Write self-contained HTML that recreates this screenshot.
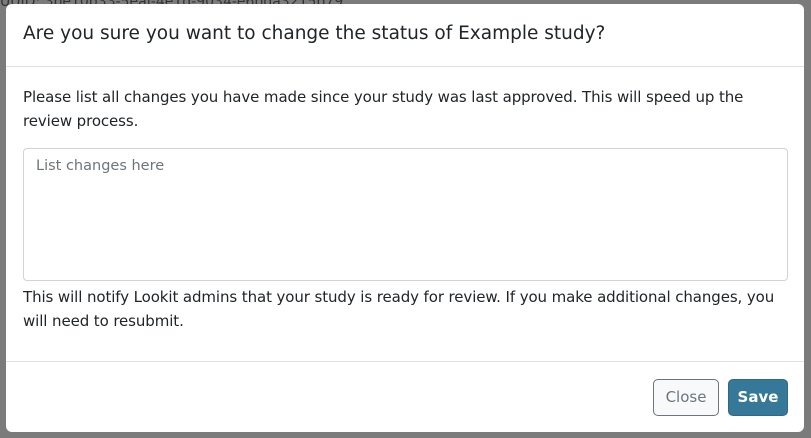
<!DOCTYPE html>
<html><head><meta charset="utf-8"><style>
*{box-sizing:border-box;margin:0;padding:0}
body{width:811px;height:438px;overflow:hidden;background:#7b7b7b;font-family:"DejaVu Sans","Liberation Sans",sans-serif;position:relative;color:#212529}
.bg{position:absolute;font-size:14px;color:#333}
.modal{position:absolute;left:6px;top:4px;width:798px;height:428px;background:#fff;border-radius:6px}
.hd{height:63px;border-bottom:1px solid #dee2e6;padding:19px 0 0 17px;font-size:18.5px;white-space:nowrap}
p{font-size:15px;line-height:24px;white-space:nowrap;letter-spacing:-0.1px}
.ta{position:absolute;left:17px;top:144px;width:765px;height:133px;border:1px solid #ced4da;border-radius:4px;padding:9px 12px;font-size:14.5px;color:#6c757d}
.ft{position:absolute;left:0;top:357px;width:798px;border-top:1px solid #dee2e6}
.btn{position:absolute;top:375px;height:37px;border-radius:5px;font-size:15px;text-align:center;line-height:35px}
</style></head><body>
<div class="bg" style="left:0;top:-6px">UUID: 3be10b33-5eaf-4e1d-9034-e6bda3215b79</div>
<div class="modal">
<div class="hd">Are you sure you want to change the status of Example study?</div>
<p style="position:absolute;left:17px;top:81px">Please list all changes you have made since your study was last approved. This will speed up the<br>review process.</p>
<div class="ta">List changes here</div>
<p style="position:absolute;left:17px;top:281px">This will notify Lookit admins that your study is ready for review. If you make additional changes, you<br>will need to resubmit.</p>
<div class="ft"></div>
<div class="btn" style="left:647px;width:66px;border:1px solid #6c757d;background:#f8f9fa;color:#6c757d">Close</div>
<div class="btn" style="left:722px;width:60px;background:#367898;border:1px solid #2e6a87;color:#fff;font-weight:bold">Save</div>
</div>
</body></html>
